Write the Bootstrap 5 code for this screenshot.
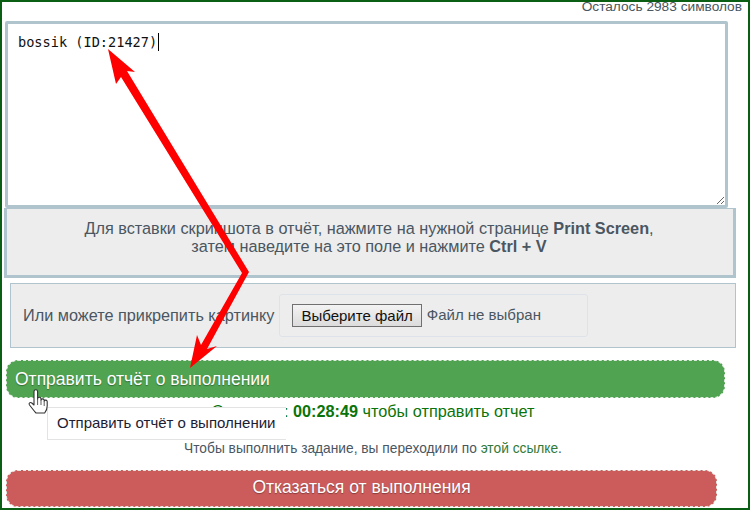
<!DOCTYPE html>
<html lang="ru">
<head>
  <meta charset="UTF-8">
  <title>Отчёт о выполнении</title>
  <link href="https://cdn.jsdelivr.net/npm/bootstrap@5.3.0/dist/css/bootstrap.min.css" rel="stylesheet">
  <style>
    body { margin: 0; background: #fff; font-family: "Liberation Sans", Arial, sans-serif; color: #4a5661; font-size: 16.25px; }
    .task-frame { position: relative; width: 750px; height: 510px; border: 2px solid #0b5f14; overflow: hidden; padding: 0 0 0 2px; }
    .chars-left { margin: -5px 6px 0 0; height: 24px; font-size: 13.7px; line-height: 20px; text-align: right; }
    .report-text { display: block; width: 723px; height: 187px; margin-left: 1px; padding: 8px 10px; border: 3px solid #b0c4ce; border-radius: 2px; font-family: "DejaVu Sans Mono", monospace; font-size: 13.6px; line-height: 20px; color: #111; outline: 0; }
    .paste-box { width: 732px; height: 70px; border: 3px solid #b0c4ce; border-top-width: 1px; background: #ededed; padding: 10px 2px 0 0; line-height: 18px; text-align: center; }
    .attach-row { width: 726px; height: 65px; margin: 5px 0 12px 6px; padding: 0 12px; border: 1px solid #b0c4ce; background: #ededed; }
    .attach-field { width: 309px; height: 43px; margin-left: 5px; padding-left: 12px; border: 1px solid #dde3e8; border-radius: 3px; font-size: 15px; gap: 5px; }
    .pick-btn { height: 23px; padding: 0 8px; border: 1px solid #707070; border-radius: 0; background: linear-gradient(#f3f3f3, #dcdcdc); color: #111; font-size: 15px; line-height: 20px; }
    .action-btn { display: block; height: 38px; margin-left: 2px; padding: 0 8px; border: 1px dashed #dfe9df; border-radius: 12px; color: #fff; font-size: 17.5px; text-shadow: 0 1px 1px rgba(0,0,0,.35); }
    .action-send { width: 719px; background: #50a351; text-align: left; }
    .action-send:hover, .action-send:active { background: #50a351; color: #fff; }
    .action-refuse { width: 711px; height: 37px; padding-bottom: 2px; background: #cc5c5c; }
    .timer-line { height: 37px; padding: 3px 6px 0 0; color: #0a740a; line-height: 20px; text-align: center; }
    .hint-line { height: 35px; padding: 4px 6px 0 0; font-size: 13.75px; line-height: 20px; text-align: center; }
    .hint-line a { color: #2f7a3a; text-decoration: none; }
    .tip-box { position: absolute; left: 45px; top: 405px; width: 239px; height: 33px; padding: 5px 9px; background: #fff; border: 1px solid #e3e3e3; border-right: 0; color: #1c1c33; font-size: 15px; line-height: 19px; white-space: nowrap; }
    .caret-mark { position: absolute; left: 156px; top: 31px; width: 1px; height: 18px; background: #000; }
    .arrows-layer { position: absolute; left: -2px; top: -2px; pointer-events: none; }
  </style>
</head>
<body>
  <div class="task-frame">
    <div class="chars-left">Осталось 2983 символов</div>
    <textarea class="form-control report-text" spellcheck="false">bossik (ID:21427)</textarea>
    <div class="paste-box">
      Для вставки скриншота в отчёт, нажмите на нужной странице <b>Print Screen</b>,<br>
      затем наведите на это поле и нажмите <b>Ctrl + V</b>
    </div>
    <div class="attach-row d-flex align-items-center">
      <span>Или можете прикрепить картинку</span>
      <div class="attach-field d-flex align-items-center">
        <button type="button" class="btn pick-btn">Выберите файл</button>
        <span>Файл не выбран</span>
      </div>
    </div>
    <button type="button" class="btn action-btn action-send">Отправить отчёт о выполнении</button>
    <div class="timer-line">Осталось: <b>00:28:49</b> чтобы отправить отчет</div>
    <div class="hint-line">Чтобы выполнить задание, вы переходили по <a href="#">этой ссылке</a>.</div>
    <button type="button" class="btn action-btn action-refuse">Отказаться от выполнения</button>

    <div class="tip-box">Отправить отчёт о выполнении</div>
    <div class="caret-mark"></div>

    <svg class="arrows-layer" width="750" height="510" viewBox="0 0 750 510">
      <polygon fill="#ff0000" points="108,49 135,72 127,71 249,272 207,349 217,346 190,368 197,335 201,345 242,273 121,77 116,84"/>
      <path fill="#fff" stroke="#333" stroke-width="1.100" stroke-linejoin="round" d="M34 391.500a1.800 1.800 0 0 1 3.600 0V399a1.700 1.700 0 0 1 3.400 0v1a1.700 1.700 0 0 1 3.200 0v1a1.600 1.600 0 0 1 3 .5V406c0 3-1 5-2.500 7H36c-2-2-4-5-6.500-8-1.300-1.800.8-3.200 2.300-2L34 405z"/>
      <path fill="none" stroke="#333" stroke-width=".8" d="M37.600 399v6M41 400v5M44.200 401v5"/>
    </svg>
  </div>
</body>
</html>
